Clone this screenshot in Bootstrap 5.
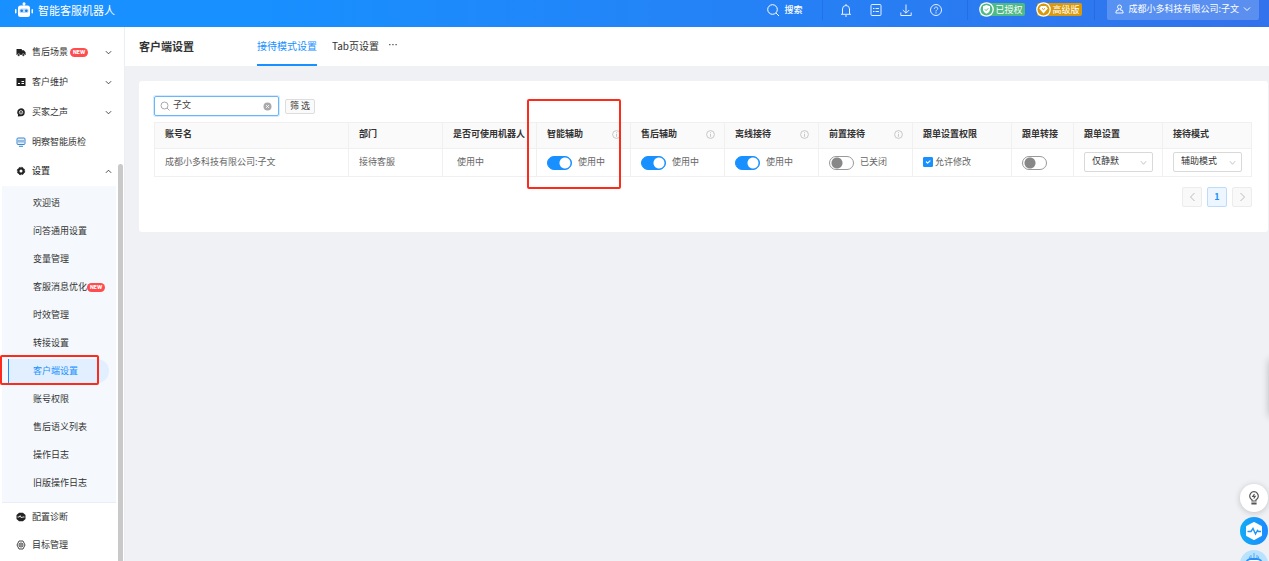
<!DOCTYPE html>
<html lang="zh-CN">
<head>
<meta charset="utf-8">
<meta name="viewport" content="width=device-width, initial-scale=1">
<title>智能客服机器人 - 客户端设置</title>
<link rel="stylesheet" href="https://cdn.jsdelivr.net/npm/bootstrap@5.3.0/dist/css/bootstrap.min.css">
<style>
  :root { --blue: #1890ff; --line: #f0f0f0; --alert: #fb2c1c; }
  body { font: 9px/16px "Noto Sans CJK SC", sans-serif; color: #333; background: #f0f1f5; }
  svg { display: block; flex: none; fill: none; }
  svg:not([stroke]) { stroke: currentColor; }
  a { color: inherit; text-decoration: none; }

  .topbar { height: 27px; padding: 0 10px 0 14px; line-height: 18px; color: #fff; background: linear-gradient(90deg, #1890ff 20%, #3272ec); }
  .topbar .row-line { height: 19px; }
  .brand { font-size: 11px; }
  .tool { width: 30px; padding: 0; border: 0; background: none; color: #e4efff; display: flex; justify-content: center; }
  .find { width: auto; margin-right: 4px; gap: 4px; align-items: center; color: #fff; font-weight: 500; }
  .rule { width: 1px; height: 21px; background: rgba(20, 70, 190, .25); }
  .plan { height: 13px; padding: 0 3px 0 15px; border-radius: 2px; line-height: 13px; position: relative; }
  .plan svg { position: absolute; left: -1px; top: -1px; }
  .plan-auth { margin-right: 12px; background: #4fba86; }
  .plan-pro { background: #d89a0c; }
  .user { height: 21px; padding: 0 8px 2px; border: 0; border-radius: 0 0 2px 2px; background: rgba(255, 255, 255, .2); color: #fff; gap: 4px; }

  .side { width: 125px; background: #fff; border-right: 1px solid #eceef2; padding-top: 10px; position: relative; overflow: hidden; flex: none; }
  .entry { height: 30px; padding: 0 12px 0 16px; gap: 6px; color: #333; }
  .entry-s { height: 28px; }
  .tagged { gap: 2px; }
  .sub { margin: 1px 8px 0 2px; padding: 3px 0 5px; background: #f5f9fd; border-bottom: 1px solid #e9eef6; }
  .sub a { display: flex; align-items: center; height: 28px; padding-left: 31px; position: relative; }
  .sub a.current { height: 24px; margin: 2px 7px 2px 6px; padding-left: 24px; border-left: 1px solid var(--blue); border-radius: 0 12px 12px 0; background: #e1effe; color: var(--blue); }
  .fresh { height: 9px; padding: 0 3px; border-radius: 5px; background: #ff4d4f; color: #fff; font: 800 5px/9px Inter, sans-serif; }
  .thumb { position: absolute; top: 137px; right: 1px; bottom: 0; width: 5px; background: #c9c9c9; border-radius: 3px 3px 0 0; }
  .outline { position: absolute; border: 2px solid var(--alert); border-radius: 2px; pointer-events: none; }
  .outline-menu { left: -9px; top: -4px; width: 99px; height: 30px; }
  .outline-cell { left: -10px; top: -24px; width: 94px; height: 90px; z-index: 1; }

  .pagebar { height: 39px; padding-left: 14px; background: #fff; }
  .pagebar h1 { width: 118px; margin: 0; font-size: 11px; font-weight: 700; line-height: 38px; }
  .tabs { font-size: 10px; gap: 15px; line-height: 37px; }
  .tabs a { height: 39px; border-bottom: 2px solid transparent; }
  .tabs a.on { color: var(--blue); border-color: var(--blue); }
  .tabs .more { margin-left: -5px; padding-top: 8px; }

  .content { padding: 15px 1px 0 14px; }
  .panel { background: #fff; border-radius: 3px; padding: 15px 16px 25px 15px; }
  .search { width: 125px; height: 20px; padding: 0 6px 0 5px; gap: 3px; border: 1px solid #69b7fa; border-radius: 2px; box-shadow: 0 0 0 1px #d4eafd; color: #aaa; }
  .search input { min-width: 0; padding: 0 0 2px; border: 0; outline: 0; color: #444; line-height: 16px; }
  .clear { padding: 0; border: 0; background: none; color: #aaa; }
  .filter { height: 15px; margin-left: 6px; padding: 0 4px; border: 1px solid #ddd; border-radius: 2px; background: #fafafa; color: #333; line-height: 12px; }

  .grid { table-layout: fixed; width: 100%; margin: 6px 0 10px; border-collapse: separate; border-spacing: 0; border: solid var(--line); border-width: 1px 0 0 1px; }
  .grid th, .grid td { padding: 0 0 0 10px; border: solid var(--line); border-width: 0 1px 1px 0; white-space: nowrap; }
  .grid th { height: 26px; padding-bottom: 3px; background: #fafafa; font-weight: 700; position: relative; }
  .grid td { height: 28px; padding-bottom: 1px; color: #666; }
  .w-name { width: auto; } .w-mid { width: 94px; } .w-perm { width: 99px; } .w-turn { width: 62px; } .w-sel { width: 89px; }
  .info { color: #bbb; margin-right: 9px; }
  .state { gap: 6px; }
  .may { gap: 2px; }
  .toggle.form-check-input { width: 25px; height: 14px; margin: 1px 0 0; border: 1px solid #999; border-radius: 7px; background: radial-gradient(circle at 7px 6px, #888 5px, transparent 6px) #fff; flex: none; }
  .toggle.form-check-input:checked { border-color: var(--blue); background: radial-gradient(circle at 17px 6px, #fff 5px, transparent 6px) var(--blue); }
  .tick.form-check-input { width: 10px; height: 10px; margin: 0; border-radius: 1px; flex: none; }
  .tick.form-check-input:checked { background-color: var(--blue); border-color: var(--blue); }
  .pick.form-select { width: 69px; height: 20px; min-height: 0; padding: 0 16px 2px 7px; border: 1px solid #d9d9d9; border-radius: 2px; color: #333; font-size: 9px; line-height: 16px; background-size: 7px 7px; background-position: right 5px center;
    background-image: url("data:image/svg+xml,%3Csvg xmlns='http://www.w3.org/2000/svg' viewBox='0 0 8 8'%3E%3Cpath fill='none' stroke='%23bbb' d='M1 2.5 4 6l3-3.5'/%3E%3C/svg%3E"); }
  .pager { gap: 5px; }
  .pager .page-item .page-link { width: 20px; height: 20px; margin: 0; padding: 0; display: flex; align-items: center; justify-content: center; border: 1px solid #ececec; border-radius: 2px; background: #f9f9f9; color: #bbb; font-size: 9px; }
  .pager .page-item.active .page-link { border-color: #bcdcfb; background: #edf6ff; color: var(--blue); font-weight: 700; }

  .dock { position: fixed; right: 1px; top: 484px; gap: 5px; z-index: 5; }
  .dock button { width: 28px; height: 28px; padding: 0; border: 0; border-radius: 50%; display: flex; align-items: center; justify-content: center; }
  .dock .tip { background: #fff; color: #555; box-shadow: 0 1px 6px rgba(0, 0, 0, .2); }
  .dock .diag { background: linear-gradient(90deg, #12acf5, #1b8aff); }
  .dock .bot { background: #b9e2ff; }
  .drawer-edge { position: fixed; right: -11px; top: 360px; width: 10px; height: 56px; box-shadow: 0 0 8px rgba(0, 0, 0, .3); }
</style>
</head>
<body class="vh-100 overflow-hidden d-flex flex-column">

<header class="topbar d-flex align-items-start flex-shrink-0">
  <a href="#" class="brand row-line d-flex align-items-center gap-1">
    <svg width="20" height="18" viewBox="0 0 20 18" stroke="none"><g fill="#fff"><circle cx="10" cy="2.800" r="1.500"/><path d="M9.500 3h1v2h-1z"/><rect x="4" y="4.500" width="12" height="11.500" rx="2.500"/><rect x="1" y="8" width="1.500" height="4.500" rx=".7"/><rect x="17.500" y="8" width="1.500" height="4.500" rx=".7"/></g><rect x="5.500" y="7.500" width="9" height="4.500" rx="1.500" fill="#b5dbff"/><circle cx="7.700" cy="9.800" r="1.300" fill="#1379e8"/><circle cx="12.300" cy="9.800" r="1.300" fill="#1379e8"/></svg>
    <span>智能客服机器人</span>
  </a>
  <div class="row-line d-flex align-items-center ms-auto">
    <button class="tool find" type="button"><svg width="14" height="14" viewBox="0 0 14 14"><circle cx="6.500" cy="6.500" r="4.800"/><path d="m10 10 3 3"/></svg>搜索</button>
    <span class="rule ms-3 me-2"></span>
    <button class="tool" type="button" aria-label="通知"><svg width="14" height="14" viewBox="0 0 14 14"><path d="M3.500 11V6a3.500 3.500 0 0 1 7 0v5M2 11.300h10M6 13h2M7 1v1.500"/></svg></button>
    <button class="tool" type="button" aria-label="任务"><svg width="14" height="14" viewBox="0 0 14 14"><rect x="2" y="1.500" width="10" height="11" rx="1"/><path d="M4 5.500h1.500M6.500 5.500H10M4 8.500h1.500M6.500 8.500H10"/></svg></button>
    <button class="tool" type="button" aria-label="下载"><svg width="14" height="14" viewBox="0 0 14 14"><path d="M7 1.500V10M3.800 7 7 10.200 10.200 7M1.800 9.500v3h10.400v-3"/></svg></button>
    <button class="tool" type="button" aria-label="帮助"><svg width="14" height="14" viewBox="0 0 14 14"><circle cx="7" cy="7" r="5.500"/><path d="M5.300 5.800C5.300 3.500 8.800 3.600 8.700 5.600 8.700 6.900 7 6.800 7 8.500M7 9.300v1.200"/></svg></button>
    <span class="rule ms-3 me-2"></span>
    <span class="plan plan-auth ms-1"><svg width="15" height="15" viewBox="0 0 15 15" stroke="none"><circle cx="7.500" cy="7.500" r="6.700" fill="#4fba86" stroke="#fff" stroke-width="1.300"/><path d="M7.500 3 11 4.200v3.300c0 2-1.500 3.300-3.500 4.200C5.500 10.800 4 9.500 4 7.500V4.200z" fill="#fff"/><path d="m5.800 7.300 1.300 1.300 2.200-2.300" stroke="#4fba86"/></svg>已授权</span>
    <span class="plan plan-pro me-2"><svg width="15" height="15" viewBox="0 0 15 15" stroke="none"><circle cx="7.500" cy="7.500" r="6.700" fill="#d89a0c" stroke="#fff" stroke-width="1.300"/><path d="M5 4h5l1.800 2.500-4.300 5-4.300-5z" fill="#fff"/><path d="m6 6.300 1.500 1.300L9 6.300" stroke="#d89a0c"/></svg>高级版</span>
    <span class="rule ms-1 me-2"></span>
    <button class="user d-flex align-items-center ms-1" type="button"><svg width="9" height="10" viewBox="0 0 9 10" stroke-width=".9"><circle cx="4.500" cy="3" r="2"/><path d="M3.300 5v1.300H1.500L.8 9h7.400l-.7-2.700H5.700V5"/></svg>成都小多科技有限公司:子文<svg width="8" height="8" viewBox="0 0 8 8"><path d="M1 2.500 4 5.500l3-3"/></svg></button>
  </div>
</header>

<div class="d-flex flex-fill overflow-hidden">
  <aside class="side">
    <nav>
      <a href="#" class="entry d-flex align-items-center"><svg width="10" height="10" viewBox="0 0 10 10" stroke="none"><path fill="#222" d="M.5 2h5.300v1.200h2L9.600 5.200V8H.5z"/><circle cx="2.700" cy="8" r="1.300" fill="#222" stroke="#fff" stroke-width=".5"/><circle cx="7.300" cy="8" r="1.300" fill="#222" stroke="#fff" stroke-width=".5"/></svg><span class="tagged d-flex align-items-center flex-fill">售后场景<b class="fresh">NEW</b></span><svg width="7" height="7" viewBox="0 0 8 8"><path d="M1 2.500 4 5.500l3-3"/></svg></a>
      <a href="#" class="entry d-flex align-items-center"><svg width="10" height="10" viewBox="0 0 10 10" stroke="none"><rect x=".5" y="1" width="9" height="8" fill="#222"/><path stroke="#fff" d="M2 6.500h2M5.500 4.500h2.500M5.500 6.500h2.500"/></svg><span class="flex-fill">客户维护</span><svg width="7" height="7" viewBox="0 0 8 8"><path d="M1 2.500 4 5.500l3-3"/></svg></a>
      <a href="#" class="entry d-flex align-items-center"><svg width="10" height="10" viewBox="0 0 10 10" stroke="none"><path fill="#222" d="M5 1.200a4 4 0 1 1-.5 8L1.800 9.500l.3-1.800A4 4 0 0 1 5 1.200z"/><circle cx="5" cy="5.300" r="1.700" stroke="#fff" stroke-width=".8"/><circle cx="5" cy="5.300" r=".5" fill="#fff"/></svg><span class="flex-fill">买家之声</span><svg width="7" height="7" viewBox="0 0 8 8"><path d="M1 2.500 4 5.500l3-3"/></svg></a>
      <a href="#" class="entry d-flex align-items-center"><svg width="10" height="10" viewBox="0 0 10 10" stroke="#3d86cc"><rect x="1" y="1" width="8" height="6.500" rx="1" fill="#e3f0fc"/><path d="M3 3v2.500M5 3v2.500M7 3v2.500M3 9.300h4"/></svg>明察智能质检</a>
      <a href="#" class="entry entry-s d-flex align-items-center"><svg width="10" height="10" viewBox="0 0 10 10"><circle cx="5" cy="5" r="2.500" stroke="#222" stroke-width="2"/><circle cx="5" cy="5" r="3.700" stroke="#222" stroke-dasharray="1.900 1"/></svg><span class="flex-fill fw-medium">设置</span><svg width="7" height="7" viewBox="0 0 8 8"><path d="m1 5.500 3-3 3 3"/></svg></a>
      <div class="sub">
        <a href="#">欢迎语</a>
        <a href="#">问答通用设置</a>
        <a href="#">变量管理</a>
        <a href="#">客服消息优化<b class="fresh">NEW</b></a>
        <a href="#">时效管理</a>
        <a href="#">转接设置</a>
        <a href="#" class="current" aria-current="page">客户端设置<span class="outline outline-menu"></span></a>
        <a href="#">账号权限</a>
        <a href="#">售后语义列表</a>
        <a href="#">操作日志</a>
        <a href="#">旧版操作日志</a>
      </div>
      <a href="#" class="entry entry-s d-flex align-items-center"><svg width="10" height="10" viewBox="0 0 10 10" stroke="none"><path fill="#222" d="M3 .8h4L9.500 3v4L7 9.200H3L.5 7V3z"/><path stroke="#fff" stroke-width=".9" d="M1.500 5h1.700l1-1.300L5.500 6l1-1h2"/></svg>配置诊断</a>
      <a href="#" class="entry entry-s d-flex align-items-center"><svg width="10" height="10" viewBox="0 0 10 10" stroke-width=".9"><path d="M3 1h4l2 4-2 4H3L1 5z"/><circle cx="5" cy="5" r="2"/><circle cx="5" cy="5" r=".5"/></svg>目标管理</a>
    </nav>
    <span class="thumb"></span>
  </aside>

  <main class="flex-fill overflow-hidden">
    <div class="pagebar d-flex">
      <h1>客户端设置</h1>
      <nav class="tabs d-flex"><a href="#" class="on">接待模式设置</a><a href="#">Tab页设置</a><a href="#" class="more" aria-label="更多"><svg width="8" height="20" viewBox="0 0 8 20" stroke="none"><path fill="#666" d="M0 9h1.500v1.300H0zM3.200 9h1.500v1.300H3.200zM6.400 9h1.500v1.300H6.400z"/></svg></a></nav>
    </div>
    <div class="content">
      <section class="panel">
        <div class="d-flex align-items-center">
          <div class="search d-flex align-items-center">
            <svg width="10" height="10" viewBox="0 0 10 10"><circle cx="4.500" cy="4.500" r="3.500"/><path d="m7 7 2.500 2.500"/></svg>
            <input class="flex-fill" type="text" value="子文" aria-label="搜索账号">
            <button class="clear" type="button" aria-label="清除"><svg width="9" height="9" viewBox="0 0 9 9" stroke="none"><circle cx="4.500" cy="4.500" r="4" fill="#aaa"/><path stroke="#fff" stroke-width=".8" d="m3 3 3 3M6 3 3 6"/></svg></button>
          </div>
          <button class="filter" type="button">筛 选</button>
        </div>
        <table class="grid">
          <colgroup><col class="w-name"><col class="w-mid"><col class="w-mid"><col class="w-mid"><col class="w-mid"><col class="w-mid"><col class="w-mid"><col class="w-perm"><col class="w-turn"><col class="w-sel"><col class="w-sel"></colgroup>
          <thead>
            <tr>
              <th>账号名</th><th>部门</th><th>是否可使用机器人</th>
              <th><div class="d-flex align-items-center justify-content-between">智能辅助<svg class="info" width="9" height="9" viewBox="0 0 9 9" stroke-width=".8"><circle cx="4.500" cy="4.500" r="3.900"/><path d="M4.500 4v2.800M4.500 2.200v1"/></svg></div><span class="outline outline-cell"></span></th>
              <th><div class="d-flex align-items-center justify-content-between">售后辅助<svg class="info" width="9" height="9" viewBox="0 0 9 9" stroke-width=".8"><circle cx="4.500" cy="4.500" r="3.900"/><path d="M4.500 4v2.800M4.500 2.200v1"/></svg></div></th>
              <th><div class="d-flex align-items-center justify-content-between">离线接待<svg class="info" width="9" height="9" viewBox="0 0 9 9" stroke-width=".8"><circle cx="4.500" cy="4.500" r="3.900"/><path d="M4.500 4v2.800M4.500 2.200v1"/></svg></div></th>
              <th><div class="d-flex align-items-center justify-content-between">前置接待<svg class="info" width="9" height="9" viewBox="0 0 9 9" stroke-width=".8"><circle cx="4.500" cy="4.500" r="3.900"/><path d="M4.500 4v2.800M4.500 2.200v1"/></svg></div></th>
              <th>跟单设置权限</th><th>跟单转接</th><th>跟单设置</th><th>接待模式</th>
            </tr>
          </thead>
          <tbody>
            <tr>
              <td>成都小多科技有限公司:子文</td><td>接待客服</td><td><span class="ps-1">使用中</span></td>
              <td><label class="state d-flex align-items-center"><input class="form-check-input toggle" type="checkbox" role="switch" checked>使用中</label></td>
              <td><label class="state d-flex align-items-center"><input class="form-check-input toggle" type="checkbox" role="switch" checked>使用中</label></td>
              <td><label class="state d-flex align-items-center"><input class="form-check-input toggle" type="checkbox" role="switch" checked>使用中</label></td>
              <td><label class="state d-flex align-items-center"><input class="form-check-input toggle" type="checkbox" role="switch">已关闭</label></td>
              <td><label class="may d-flex align-items-center"><input class="form-check-input tick" type="checkbox" checked>允许修改</label></td>
              <td><div class="d-flex"><input class="form-check-input toggle" type="checkbox" role="switch" aria-label="跟单转接"></div></td>
              <td><select class="form-select pick" aria-label="跟单设置"><option>仅静默</option></select></td>
              <td><select class="form-select pick" aria-label="接待模式"><option>辅助模式</option></select></td>
            </tr>
          </tbody>
        </table>
        <ul class="pagination pager justify-content-end mb-0">
          <li class="page-item"><a class="page-link" href="#" aria-label="上一页"><svg width="9" height="10" viewBox="0 0 9 10"><path d="M6.500 1 2.500 5l4 4"/></svg></a></li>
          <li class="page-item active"><a class="page-link" href="#">1</a></li>
          <li class="page-item"><a class="page-link" href="#" aria-label="下一页"><svg width="9" height="10" viewBox="0 0 9 10"><path d="m2.500 1 4 4-4 4"/></svg></a></li>
        </ul>
      </section>
    </div>
  </main>
</div>

<div class="drawer-edge"></div>
<div class="dock d-flex flex-column">
  <button class="tip" type="button" aria-label="提示"><svg width="12" height="14" viewBox="0 0 12 14" stroke-width="1.200"><path d="M4 10V8.800a4.300 4.300 0 1 1 4 0V10zM4 12h4v1H4z"/><path d="M6.500 3 4.800 5.300h2.400L5.700 7.500"/></svg></button>
  <button class="diag" type="button" aria-label="诊断"><svg width="20" height="20" viewBox="0 0 20 20" stroke="none"><path d="M10 2.500 16.500 6v8L10 17.500 3.500 14V6z" fill="#fff" stroke="#fff" stroke-width="3" stroke-linejoin="round"/><path stroke="#1b98fa" stroke-width="1.400" d="M3.500 10.500H7l2-3 2.500 5.500 2-3.500 1 1H17"/></svg></button>
  <button class="bot" type="button" aria-label="助手"><svg width="28" height="28" viewBox="0 0 28 28" stroke="none"><path stroke="#51adf7" d="M14 3v6M11 5v3M17 5v3M9.500 6.500v2M18.500 6.500v2"/><rect x="6" y="9" width="16" height="12" rx="5" fill="#fff" stroke="#2a90f5" stroke-width="2"/></svg></button>
</div>
<script src="https://cdn.jsdelivr.net/npm/bootstrap@5.3.0/dist/js/bootstrap.bundle.min.js"></script>
</body>
</html>
